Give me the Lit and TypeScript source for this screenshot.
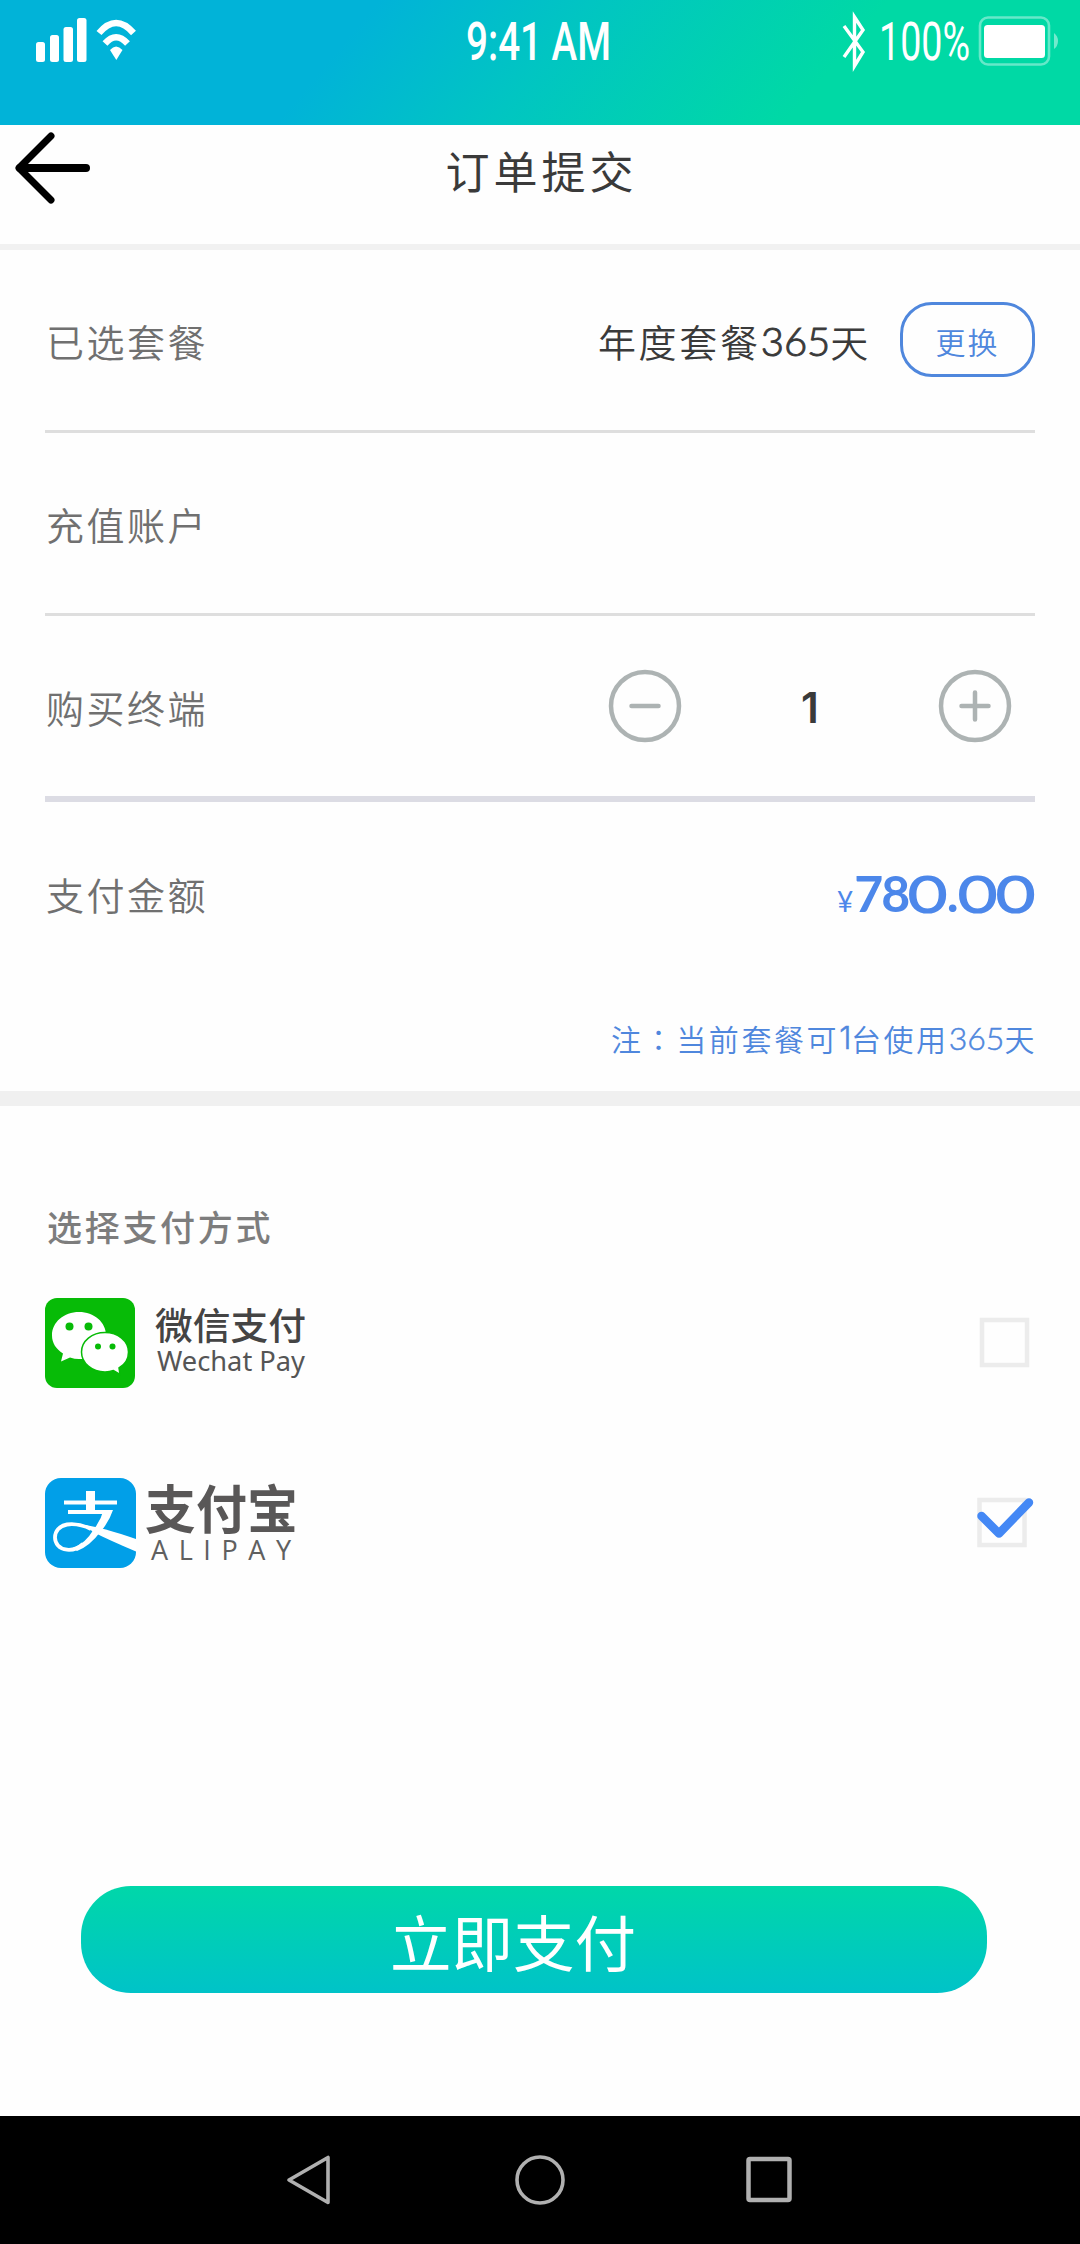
import { LitElement, html, css, svg } from "lit";
import { customElement, property, state } from "lit/decorators.js";

const cjk = css`"Noto Sans CJK SC", sans-serif`;

@customElement("status-bar")
class StatusBar extends LitElement {
  static styles = css`
    :host {
      display: block;
      height: 125px;
      background: linear-gradient(130deg, #01b3d8 32%, #01c5c2 50%, #00d9a5 75%);
    }
    svg { display: block; }
    .time { font: 500 53px Roboto, sans-serif; fill: #fff; }
    .pct { font: 400 53px Roboto, sans-serif; fill: #fff; }
  `;
  render() {
    return html`<svg width="1080" height="125" viewBox="0 0 1080 125" fill="#fff">
      <rect x="36" y="42" width="9" height="20" rx="2.5" />
      <rect x="50" y="35" width="9" height="27" rx="2.5" />
      <rect x="63.5" y="27" width="9.5" height="35" rx="2.5" />
      <rect x="77" y="18" width="9.5" height="44" rx="2.5" />
      <g fill="none" stroke="#fff" stroke-width="6.500">
        <path d="M99 33Q116 13 133.500 33" />
        <path d="M105 43.500Q116 31 127.500 43.500" />
      </g>
      <path d="M110 50Q116 43 122.500 50L116.300 60Z" />
      <text class="time" x="466" y="60" textLength="145" lengthAdjust="spacingAndGlyphs">9:41 AM</text>
      <path d="M844 26L863 52L854.500 66V17L863 30L844 57" fill="none" stroke="#fff" stroke-width="3.400" />
      <text class="pct" x="879" y="60" textLength="91" lengthAdjust="spacingAndGlyphs">100%</text>
      <rect x="980" y="17.500" width="69" height="47" rx="8" fill="none" stroke="#fff" stroke-opacity=".4" stroke-width="2.600" />
      <rect x="984" y="25" width="61" height="33" rx="3.500" />
      <path d="M1054 33Q1058 36 1058 41T1054 49Z" fill-opacity=".45" />
    </svg>`;
  }
}

@customElement("pay-option")
class PayOption extends LitElement {
  @property() kind = "wechat";
  @property({ type: Boolean }) checked = false;
  static styles = css`
    :host { display: flex; justify-content: space-between; height: 90px; padding: 0 41px 0 45px; }
    svg { display: block; overflow: visible; }
    .wx-cn { font: 500 37px ${cjk}; fill: #444; }
    .wx-en { font: 400 28px "Noto Sans", "Open Sans", sans-serif; fill: #555; }
    .ali-cn { font: 700 52px ${cjk}; fill: #595757; }
    .ali-en { font: 400 27px "Open Sans", sans-serif; fill: #606060; }
  `;
  private wechat() {
    return svg`
      <rect width="90" height="90" rx="12" fill="#07bb07" />
      <path d="M34 14C19 14 7 24 7 37.500C7 45 11 51 18 55.500L16 63.500L25 59.500C28 60.500 31 61 34 61C49 61 61 51 61 37.500C61 24 49 14 34 14Z" fill="#fff" />
      <path d="M60 34.500C47 34.500 36.500 43 36.500 54S47 74 60 74C63 74 66 73.500 68.500 72.500L75 76.500L74 70C80 66.500 83.500 61 83.500 54C83.500 43 73 34.500 60 34.500Z" fill="#fff" stroke="#07bb07" stroke-width="1.500" />
      <g fill="#07bb07">
        <circle cx="24.500" cy="28.500" r="4" /><circle cx="43.500" cy="28.500" r="4" />
        <circle cx="53" cy="48.500" r="3" /><circle cx="67.500" cy="48.500" r="3" />
      </g>
      <text class="wx-cn" x="110" y="42" textLength="151" lengthAdjust="spacingAndGlyphs">微信支付</text>
      <text class="wx-en" x="112" y="73" textLength="148" lengthAdjust="spacingAndGlyphs">Wechat Pay</text>`;
  }
  private alipay() {
    return svg`
      <rect width="91" height="90" rx="16" fill="#019fe8" />
      <g fill="#fff">
        <rect x="41" y="13" width="9" height="22" />
        <rect x="19" y="22.500" width="53" height="4" />
        <rect x="23" y="32" width="42" height="4" />
        <path d="M58.500 32H68Q64 44 56 53Q45 68 32 73L28 70Q40 66 49 51Q56 42 58.500 32Z" />
        <path d="M40 47Q56 49 91 61V73.500Q66 63 48 54Z" />
      </g>
      <path d="M46 51Q34 45 22 46.500C6 49 6 70 22 71.700Q31 72.500 38 66" fill="none" stroke="#fff" stroke-width="3.800" />
      <text class="ali-cn" x="100" y="50.500" textLength="153" lengthAdjust="spacingAndGlyphs">支付宝</text>
      <text class="ali-en" x="106" y="82" textLength="140">ALIPAY</text>`;
  }
  render() {
    return html`
      <svg width="300" height="90" viewBox="0 0 300 90">
        ${this.kind === "wechat" ? this.wechat() : this.alipay()}
      </svg>
      <svg width="62" height="90" viewBox="0 0 62 90" fill="none">
        ${this.checked
          ? svg`<rect x="2.500" y="22" width="45" height="45" stroke="#ececec" stroke-width="4.500" />
              <path d="M4.500 38L22 55.500L52 24.500" stroke="#4488f5" stroke-width="8.500" stroke-linecap="round" stroke-linejoin="round" />`
          : svg`<rect x="5" y="22" width="45" height="45" stroke="#ececec" stroke-width="4.500" />`}
      </svg>`;
  }
}

@customElement("app-root")
class AppRoot extends LitElement {
  @state() private count = 1;
  @state() private method = "alipay";
  static styles = css`
    :host {
      display: flex;
      flex-direction: column;
      box-sizing: border-box;
      width: 1080px;
      height: 2244px;
      overflow: hidden;
      background: #fefefe;
      color: #3a3a3a;
      font-family: ${cjk};
    }
    svg { display: block; }
    button { font: inherit; color: inherit; background: none; border: 0; padding: 0; margin: 0; }
    .header {
      display: grid;
      grid-template-columns: 100px 1fr 100px;
      height: 119px;
      border-bottom: 6px solid #f1f1f1;
    }
    .back { display: block; height: 86px; }
    .title {
      margin: 0;
      height: 90px;
      padding-left: 3px;
      text-align: center;
      font-size: 44px;
      line-height: 90px;
      font-weight: 400;
      letter-spacing: 4px;
    }
    .rows { padding: 0 45px; }
    .row {
      display: flex;
      align-items: center;
      height: 180px;
      border-bottom: 3px solid #dedede;
      padding-left: 1px;
    }
    .row.thick { border-bottom: 6px solid #dcdce4; }
    .row.amount { height: 187px; border: 0; }
    .label {
      flex: 1;
      padding-top: 1px;
      font-size: 38px;
      line-height: 60px;
      font-weight: 350;
      letter-spacing: 2.500px;
      color: #707070;
    }
    .amount .label { padding: 0 0 4px; }
    .plan {
      display: flex;
      padding-top: 1px;
      font-size: 38px;
      line-height: 60px;
      font-weight: 350;
      letter-spacing: 2.700px;
      margin-right: 29px;
    }
    .num { font-family: Lato, sans-serif; font-size: 40px; letter-spacing: 0; font-weight: 300; -webkit-text-stroke: 1px currentColor; }
    .change {
      box-sizing: border-box;
      width: 135px;
      height: 75px;
      margin-top: -2px;
      border: 3px solid #4f87dd;
      border-radius: 32px;
      color: #4f87dd;
      font-size: 30px;
      line-height: 72px;
      font-weight: 350;
      letter-spacing: 2px;
      text-align: center;
    }
    .stepper { display: flex; align-items: center; margin: 0 23px 0 0; }
    .count {
      width: 256px;
      text-align: center;
      font: 600 42px/60px Inter, sans-serif;
      padding-top: 4px;
    }
    .price { display: flex; align-items: baseline; color: #4c87ea; font: 700 50px/60px Lato, sans-serif; padding-top: 3px; }
    .lead { letter-spacing: -1.800px; }
    .yen { font-size: 28px; font-weight: 400; margin-right: 1px; }
    .zero { display: inline-block; width: 38.200px; text-align: center; }
    .zero span { display: inline-block; transform: scaleX(1.300); font-weight: 300; -webkit-text-stroke: 3.200px currentColor; }
    .note {
      display: flex;
      justify-content: flex-end;
      height: 102px;
      padding-right: 43px;
      border-bottom: 15px solid #f0f0f0;
      font-size: 30px;
      line-height: 98px;
      font-weight: 350;
      letter-spacing: 2.600px;
      color: #4f87dd;
    }
    .note .num { font-size: 32px; letter-spacing: 0; -webkit-text-stroke: 0.500px currentColor; }
    .note .one { font-family: Inter, sans-serif; font-size: 31px; letter-spacing: -0.500px; }
    .colon { font-family: "Noto Sans CJK TC", sans-serif; }
    .methods { display: flex; flex-direction: column; gap: 90px; }
    .section {
      margin: 0;
      padding: 90px 0 0 47px;
      height: 102px;
      font-size: 35px;
      line-height: 60px;
      font-weight: 500;
      letter-spacing: 2.700px;
      color: #7d7d7d;
    }
    .pay {
      margin: 318px 0 0 81px;
      width: 906px;
      height: 107px;
      border-radius: 50px;
      background: linear-gradient(#00d7a9, #00c3c8);
      color: #fff;
      font-size: 61.500px;
      line-height: 109px;
      text-align: center;
      padding-right: 42px;
      box-sizing: border-box;
    }
    .nav {
      display: flex;
      align-items: center;
      justify-content: center;
      gap: 179px;
      height: 128px;
      margin-top: auto;
      background: #000;
    }
  `;
  private circle(plus: boolean) {
    return html`<svg width="74" height="74" viewBox="0 0 74 74" fill="none" stroke="#adb3b3" stroke-width="4.500">
      <circle cx="37" cy="37" r="34" />
      <path d=${plus ? "M23.500 37H50.500M37 23.500V50.500" : "M23.500 37H50.500"} stroke-linecap="round" />
    </svg>`;
  }
  private zero() {
    return html`<span class="zero"><span>0</span></span>`;
  }
  render() {
    return html`
      <status-bar></status-bar>
      <header class="header">
        <button class="back" aria-label="返回">
          <svg width="100" height="86" viewBox="0 0 100 86" fill="none" stroke="#000" stroke-linecap="round" stroke-linejoin="round">
            <path d="M86 43H20" stroke-width="8" />
            <path d="M51 11L19 43L51 75" stroke-width="7" />
          </svg>
        </button>
        <h1 class="title">订单提交</h1>
      </header>
      <section class="rows">
        <div class="row">
          <span class="label">已选套餐</span>
          <span class="plan">年度套餐<span class="num">365</span>天</span>
          <button class="change">更换</button>
        </div>
        <div class="row"><span class="label">充值账户</span></div>
        <div class="row thick">
          <span class="label">购买终端</span>
          <div class="stepper">
            <button aria-label="减少" @click=${() => (this.count = Math.max(1, this.count - 1))}>${this.circle(false)}</button>
            <span class="count">${this.count}</span>
            <button aria-label="增加" @click=${() => this.count++}>${this.circle(true)}</button>
          </div>
        </div>
        <div class="row amount">
          <span class="label">支付金额</span>
          <span class="price"><span class="yen">¥</span><span class="lead">78</span>${this.zero()}.${this.zero()}${this.zero()}</span>
        </div>
      </section>
      <div class="note">注<span class="colon">：</span>当前套餐可<span class="num one">1</span>台使用<span class="num">365</span>天</div>
      <h2 class="section">选择支付方式</h2>
      <section class="methods">
        ${["wechat", "alipay"].map(
          (kind) => html`<pay-option .kind=${kind} .checked=${this.method === kind} @click=${() => (this.method = kind)}></pay-option>`
        )}
      </section>
      <button class="pay">立即支付</button>
      <nav class="nav">
        <svg width="52" height="52" viewBox="0 0 52 52" fill="none" stroke="#b0b0b0" stroke-width="3.600" stroke-linejoin="round"><path d="M6 26L45 3.500V48.500Z" /></svg>
        <svg width="52" height="52" viewBox="0 0 52 52" fill="none" stroke="#b0b0b0" stroke-width="3.600"><circle cx="26" cy="26" r="23" /></svg>
        <svg width="52" height="52" viewBox="0 0 52 52" fill="none" stroke="#b0b0b0" stroke-width="4.500"><rect x="3.500" y="5" width="41" height="41" rx="1.500" /></svg>
      </nav>
    `;
  }
}
